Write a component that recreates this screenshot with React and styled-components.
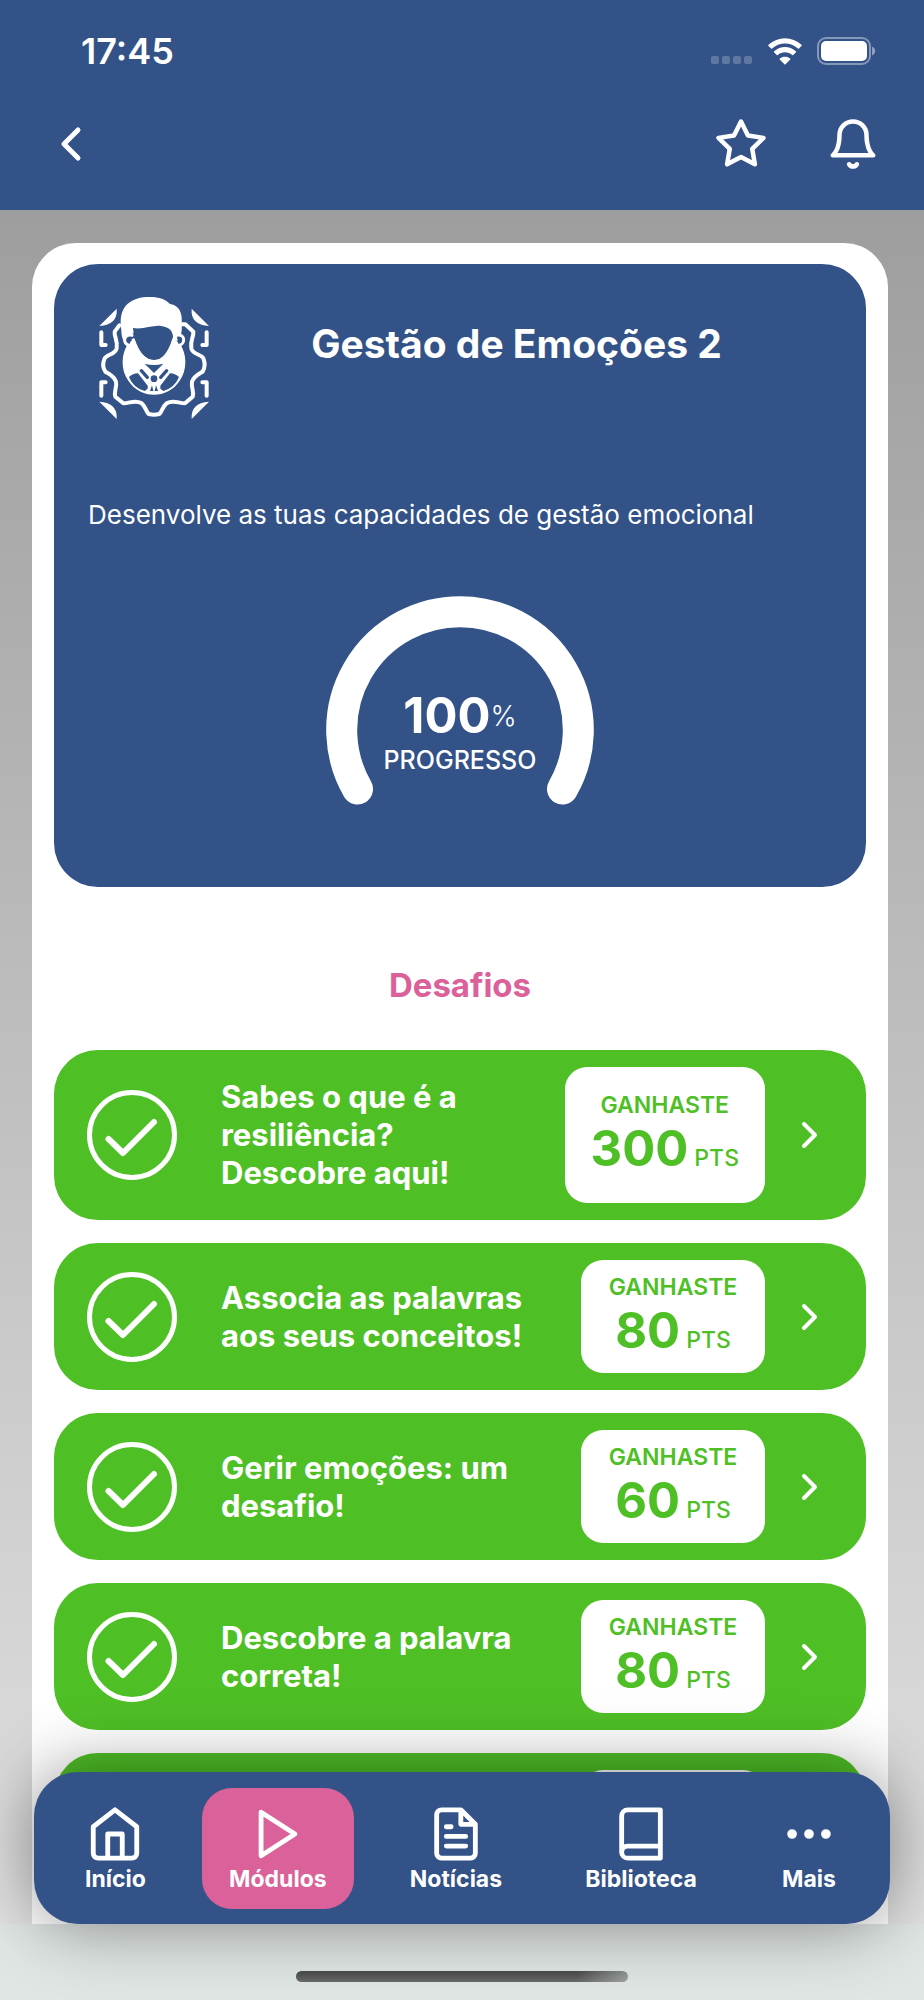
import React from "react";
import styled, { createGlobalStyle } from "styled-components";

const blue = "#325288";
const green = "#4fbf26";
const pink = "#da6199";

const GlobalStyle = createGlobalStyle`
  * {
    box-sizing: border-box;
  }
  body {
    margin: 0;
    font-family: Inter, "Liberation Sans", sans-serif;
    color: #fff;
  }
  h1, h2, p, ul {
    margin: 0;
    padding: 0;
  }
  button {
    background: none;
    border: none;
    color: inherit;
    cursor: pointer;
    font-family: inherit;
    padding: 0;
  }
`;

const Screen = styled.div`
  background-color: #e0e6e4;
  display: flex;
  flex-direction: column;
  height: 100vh;
`;
const Header = styled.header`
  background-color: ${blue};
  padding: 28px 44px 39px 54px;
`;
const StatusBar = styled.div`
  align-items: center;
  display: flex;
  justify-content: space-between;
  padding: 0 4px 0 27px;
`;
const Time = styled.time`
  font-size: 36px;
  font-weight: 600;
  line-height: 46px;
`;
const StatusIcons = styled.div`
  align-items: center;
  display: flex;
  gap: 14px;
`;
const Toolbar = styled.div`
  align-items: center;
  display: flex;
  justify-content: space-between;
  padding-top: 43px;
`;
const Actions = styled.div`
  display: flex;
  gap: 58px;
`;
const IconButton = styled.button`
  display: flex;
  svg {
    display: block;
  }
`;
const Body = styled.div`
  flex: 1;
  min-height: 0;
  position: relative;
`;
const Scroll = styled.main`
  background: linear-gradient(#9e9e9e, #e0e0e0);
  height: 100%;
  overflow-y: auto;
  padding: 33px 36px 0 32px;
  scrollbar-width: none;
`;
const Sheet = styled.div`
  background-color: #fff;
  border-radius: 44px 44px 0 0;
  padding: 21px 22px 200px;
`;
const ModuleCard = styled.section`
  background-color: ${blue};
  border-radius: 44px;
  padding: 32px 34px 77px;
`;
const ModuleTop = styled.div`
  display: flex;
  padding-left: 10px;
`;
const ModuleTitle = styled.h1`
  flex: 1;
  font-size: 39px;
  font-weight: 700;
  line-height: 48px;
  padding: 24px 9px 0 0;
  text-align: center;
`;
const Description = styled.p`
  font-size: 26px;
  font-weight: 400;
  line-height: 36px;
  margin-top: 77px;
`;
const Gauge = styled.div`
  display: grid;
  justify-items: center;
  margin-top: 63px;
  > * {
    grid-area: 1 / 1;
  }
`;
const GaugeText = styled.div`
  padding-top: 91px;
  text-align: center;
`;
const GaugeValue = styled.p`
  font-size: 49px;
  font-weight: 700;
  line-height: 58px;
`;
const Percent = styled.span`
  font-size: 28px;
  font-weight: 300;
  vertical-align: 7px;
`;
const GaugeLabel = styled.p`
  font-size: 25px;
  font-weight: 500;
  line-height: 30px;
`;
const SectionTitle = styled.h2`
  color: ${pink};
  font-size: 33px;
  font-weight: 700;
  line-height: 40px;
  padding: 78px 0 45px;
  text-align: center;
`;
const List = styled.ul`
  display: flex;
  flex-direction: column;
  gap: 23px;
  list-style: none;
`;
const Challenge = styled.button`
  align-items: center;
  background-color: ${green};
  border-radius: 44px;
  display: flex;
  min-height: 147px;
  padding: 17px 45px 17px 33px;
  text-align: left;
  width: 100%;
`;
const ChallengeTitle = styled.span`
  flex: 1;
  font-size: 31px;
  font-weight: 700;
  line-height: 38px;
  padding: 11px 26px 11px 44px;
`;
const Badge = styled.span`
  align-items: center;
  align-self: stretch;
  background-color: #fff;
  border-radius: 22px;
  color: ${green};
  display: flex;
  flex-direction: column;
  justify-content: center;
  margin-right: 34px;
  min-width: 184px;
  padding: 9px 26px 0;
`;
const BadgeLabel = styled.span`
  font-size: 23px;
  font-weight: 600;
  line-height: 28px;
`;
const BadgePoints = styled.span`
  font-size: 49px;
  font-weight: 700;
  line-height: 60px;
`;
const Unit = styled.small`
  font-size: 23px;
  font-weight: 500;
`;
const TabBar = styled.nav`
  background-color: ${blue};
  border-radius: 44px;
  bottom: 0;
  box-shadow: 0 0 70px rgba(0, 0, 0, 0.44);
  display: flex;
  justify-content: space-between;
  left: 34px;
  padding: 16px 25px 15px 24px;
  position: absolute;
  right: 34px;
  z-index: 1;
`;
const Tab = styled.a`
  align-items: center;
  background-color: ${({ $active }) => ($active ? pink : "transparent")};
  border-radius: 30px;
  color: #fff;
  display: flex;
  flex-direction: column;
  font-size: 23px;
  font-weight: 700;
  height: 121px;
  line-height: 32px;
  padding: 17px 27px 0;
  text-decoration: none;
`;
const HomeArea = styled.footer`
  display: flex;
  height: 76px;
  justify-content: center;
  padding-top: 47px;
`;
const HomeIndicator = styled.div`
  background: linear-gradient(90deg, transparent 85%, rgba(224, 230, 228, 0.45)),
    linear-gradient(#474a49, #6b6b69);
  border-radius: 6px;
  height: 11px;
  width: 36%;
`;

const Stroke = ({ size, children }) => (
  <svg
    width={size}
    height={size}
    viewBox="0 0 24 24"
    fill="none"
    stroke="currentColor"
    strokeWidth="2"
    strokeLinecap="round"
    strokeLinejoin="round"
    aria-hidden="true"
  >
    {children}
  </svg>
);

const Signal = () => (
  <svg width="42" height="28" viewBox="0 0 42 28" fill="#fff" opacity="0.22" aria-hidden="true">
    <rect x="0" y="19" width="8" height="8" rx="2" />
    <rect x="11" y="19" width="8" height="8" rx="2" />
    <rect x="22" y="19" width="8" height="8" rx="2" />
    <rect x="33" y="19" width="8" height="8" rx="2" />
  </svg>
);
const Wifi = () => (
  <svg width="36" height="27" viewBox="0 0 36 27" fill="#fff" aria-hidden="true">
    <path d="M18 5.4c4.9 0 9.5 1.9 12.9 5.2.3.3.7.3 1 0l2.6-2.6c.4-.4.4-.9 0-1.2C25.3-2 10.7-2 1.5 6.8c-.4.3-.4.8 0 1.2l2.6 2.6c.3.3.7.3 1 0C8.5 7.3 13.1 5.4 18 5.4z" />
    <path d="M18 14.2c2.7 0 5.2 1 7.2 2.8.3.3.7.3 1 0l2.6-2.6c.4-.4.4-.9 0-1.2-6.1-5.7-15.5-5.7-21.6 0-.4.3-.4.8 0 1.2l2.6 2.6c.3.3.7.3 1 0 2-1.8 4.5-2.8 7.2-2.8z" />
    <path d="M23.1 20.5c-2.9-2.5-7.3-2.5-10.2 0-.4.3-.4.8 0 1.2l4.5 4.6c.3.3.8.3 1.1 0l4.6-4.6c.4-.4.4-.9 0-1.2z" />
  </svg>
);
const Battery = () => (
  <svg width="59" height="28" viewBox="0 0 59 28" fill="#fff" aria-hidden="true">
    <rect x="1" y="1" width="52" height="26" rx="8" fill="none" stroke="#fff" strokeWidth="2" opacity="0.4" />
    <rect x="4" y="4" width="46" height="20" rx="5" />
    <path d="M55 9.5v9c2-.8 3.2-2.5 3.2-4.5S57 10.3 55 9.5z" opacity="0.45" />
  </svg>
);

const Portrait = () => (
  <svg width="112" height="124" viewBox="24 18 336 372" fill="none" stroke="#fff" strokeWidth="12" strokeLinecap="round" strokeLinejoin="round" aria-hidden="true">
    <g fill="#fff" stroke="none">
      <path d="M28 108 80 56Q84 104 28 108zM357 108 305 56Q301 104 357 108zM28 335 80 387Q84 339 28 335zM357 335 305 387Q301 339 357 335z" />
      <path d="M94 120C86 66 104 30 160 22c40-4 65 4 80 20 28 5 38 26 35 60 2 22-2 40-14 52l-12-8c2-24-14-36-36-38-26-3-56 12-84 6l2 16-16 6-7 24c-10-6-14-22-14-40z" />
      <path d="M116 160C92 190 92 242 115 272c36 56 118 56 154 0 23-30 23-82-1-112l-17-14c-16 46-34 64-58 64-26 0-48-24-62-64z" />
    </g>
    <path d="M34 127v38h13M350 127v38h-13M34 317v-40h13M350 317v-40h-13" />
    <path d="M88 106 74 125c-2 15 10 26 6 50-4 19-30 18-36 30-6 14-5 30 2 40 12 7 26 12 32 30 4 18-8 30-2 45l24 20c20 0 35-12 55 0 13 12 13 25 21 32q16 4 32 0c8-7 8-20 22-32 20-12 35 0 55 0l23-20c6-15-6-27-2-45 6-17 20-23 32-30 6-10 8-25 2-40-6-13-32-11-36-30-4-25 8-35 6-50l-24-22h-10" />
    <path fill={blue} d="M126 136c-28-6-28 28-8 30M260 136c28-6 26 28 6 30" strokeWidth="9" />
    <path d="M130 150c14 42 34 65 62 65s46-22 60-68" strokeWidth="10" />
    <g fill={blue} stroke="none">
      <path d="M164 221q28 8 56 0l-28 28z" />
      <path d="M117 261q14-12 27-11l29 37v9l-9 7c-22-6-38-20-47-42zM267 261q-14-12-27-11l-29 37v9l9 7c22-6 38-20 47-42z" />
      <circle cx="192" cy="266" r="10" />
      <path d="M186 286l-6 17h10zM198 286l6 17h-10z" />
    </g>
    <path stroke={blue} strokeWidth="10" d="M154 242l18 20M230 242l-18 20" />
  </svg>
);
const Arc = () => (
  <svg width="268" height="214" viewBox="0 0 268 214" fill="none" aria-hidden="true">
    <path d="M31.5 193a118.300 118.300 0 1 1 205 0" stroke="#fff" strokeWidth="31" strokeLinecap="round" />
  </svg>
);
const Check = () => (
  <svg width="90" height="90" viewBox="0 0 90 90" fill="none" stroke="#fff" strokeWidth="5" strokeLinecap="round" strokeLinejoin="round" aria-hidden="true">
    <circle cx="45" cy="45" r="42.5" />
    <path d="M21.5 49 36 63l31-31" strokeWidth="6" />
  </svg>
);
const Next = () => (
  <svg width="22" height="30" viewBox="0 0 22 30" fill="none" stroke="#fff" strokeWidth="4" strokeLinecap="round" strokeLinejoin="round" aria-hidden="true">
    <path d="M5 4l11 11L5 26" />
  </svg>
);

const challenges = [
  { titulo: "Sabes o que é a resiliência? Descobre aqui!", pontos: 300 },
  { titulo: "Associa as palavras aos seus conceitos!", pontos: 80 },
  { titulo: "Gerir emoções: um desafio!", pontos: 60 },
  { titulo: "Descobre a palavra correta!", pontos: 80 },
  { titulo: "", pontos: 80 },
];

const tabs = [
  {
    label: "Início",
    icon: <path d="M3 9l9-7 9 7v11a2 2 0 0 1-2 2H5a2 2 0 0 1-2-2zM9 22V12h6v10" />,
  },
  { label: "Módulos", active: true, icon: <path d="M5 3l14 9-14 9z" /> },
  {
    label: "Notícias",
    icon: <path d="M14 2H6a2 2 0 0 0-2 2v16a2 2 0 0 0 2 2h12a2 2 0 0 0 2-2V8zM14 2v6h6M16 13H8M16 17H8M10 9H8" />,
  },
  {
    label: "Biblioteca",
    icon: <path d="M4 19.5A2.5 2.5 0 0 1 6.5 17H20M6.5 2H20v20H6.5A2.5 2.5 0 0 1 4 19.5v-15A2.5 2.5 0 0 1 6.5 2z" />,
  },
  {
    label: "Mais",
    icon: (
      <g fill="currentColor">
        <circle cx="5" cy="12" r="1" />
        <circle cx="12" cy="12" r="1" />
        <circle cx="19" cy="12" r="1" />
      </g>
    ),
  },
];

function ChallengeRow({ titulo, pontos }) {
  return (
    <li>
      <Challenge type="button">
        <Check />
        <ChallengeTitle>{titulo}</ChallengeTitle>
        <Badge>
          <BadgeLabel>GANHASTE</BadgeLabel>
          <BadgePoints>
            {pontos}
            <Unit> PTS</Unit>
          </BadgePoints>
        </Badge>
        <Next />
      </Challenge>
    </li>
  );
}

export default function App() {
  return (
    <Screen>
      <GlobalStyle />
      <Header>
        <StatusBar>
          <Time>17:45</Time>
          <StatusIcons>
            <Signal />
            <Wifi />
            <Battery />
          </StatusIcons>
        </StatusBar>
        <Toolbar>
          <IconButton type="button" aria-label="Voltar">
            <svg width="36" height="36" viewBox="0 0 36 36" fill="none" stroke="#fff" strokeWidth="5" strokeLinecap="round" strokeLinejoin="round">
              <path d="M24 4 10 18l14 14" />
            </svg>
          </IconButton>
          <Actions>
            <IconButton type="button" aria-label="Favorito">
              <Stroke size={54}>
                <path d="M12 2l3.09 6.26L22 9.27l-5 4.87 1.18 6.88L12 17.77l-6.18 3.25L7 14.14 2 9.27l6.91-1.01L12 2z" />
              </Stroke>
            </IconButton>
            <IconButton type="button" aria-label="Notificações">
              <Stroke size={54}>
                <path d="M18 8A6 6 0 0 0 6 8c0 7-3 9-3 9h18s-3-2-3-9M13.73 21a2 2 0 0 1-3.46 0" />
              </Stroke>
            </IconButton>
          </Actions>
        </Toolbar>
      </Header>
      <Body>
        <Scroll>
          <Sheet>
            <ModuleCard>
              <ModuleTop>
                <Portrait />
                <ModuleTitle>Gestão de Emoções 2</ModuleTitle>
              </ModuleTop>
              <Description>Desenvolve as tuas capacidades de gestão emocional</Description>
              <Gauge>
                <Arc />
                <GaugeText>
                  <GaugeValue>
                    100<Percent>%</Percent>
                  </GaugeValue>
                  <GaugeLabel>PROGRESSO</GaugeLabel>
                </GaugeText>
              </Gauge>
            </ModuleCard>
            <SectionTitle>Desafios</SectionTitle>
            <List>
              {challenges.map((item, i) => (
                <ChallengeRow key={i} {...item} />
              ))}
            </List>
          </Sheet>
        </Scroll>
        <TabBar>
          {tabs.map(({ label, icon, active }) => (
            <Tab key={label} href="#" $active={active}>
              <Stroke size={58}>{icon}</Stroke>
              {label}
            </Tab>
          ))}
        </TabBar>
      </Body>
      <HomeArea>
        <HomeIndicator />
      </HomeArea>
    </Screen>
  );
}
